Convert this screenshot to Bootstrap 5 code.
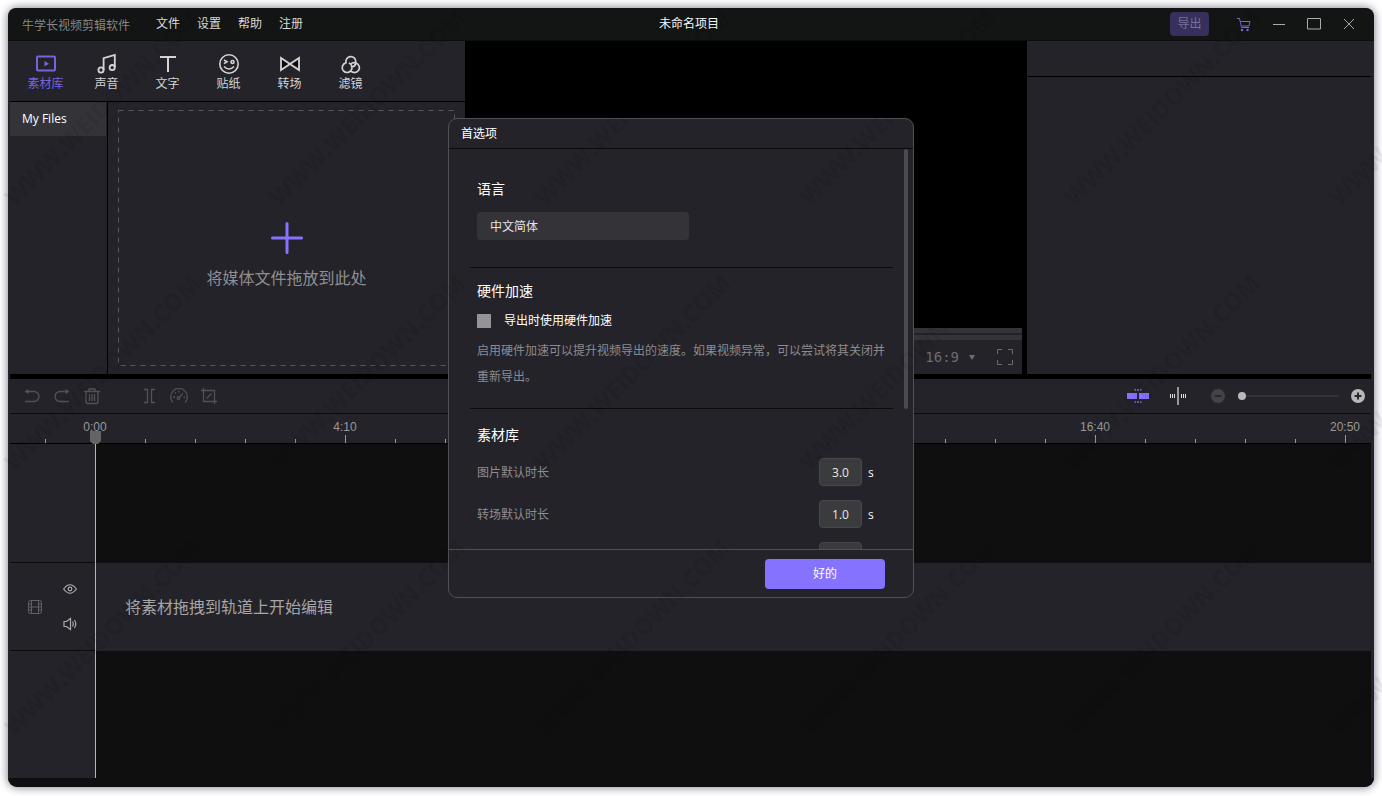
<!DOCTYPE html>
<html lang="zh-CN">
<head>
<meta charset="utf-8">
<meta name="viewport" content="width=device-width, initial-scale=1">
<title>牛学长视频剪辑软件</title>
<link href="https://cdn.jsdelivr.net/npm/bootstrap@5.3.0/dist/css/bootstrap.min.css" rel="stylesheet">
<script src="https://cdn.jsdelivr.net/npm/bootstrap@5.3.0/dist/js/bootstrap.bundle.min.js" defer></script>
<style>
  :root { --panel: #242329; --line: #0c0c0e; --accent: #8572ff; --stage: #0f0f0f; }
  body { height: 100vh; padding: 8px 8px 9px; background: #fff; overflow: hidden;
    font: 12px/16px "Open Sans", "Noto Sans CJK SC", sans-serif; color: #ccc; }
  button { background: none; border: 0; padding: 0; color: inherit; }
  svg { display: block; }
  svg:not([fill]) { fill: none; }
  svg:not([stroke]) { stroke: currentColor; }
  .app-window { background: var(--panel); border-radius: 10px; box-shadow: 0 0 8px 1px #8a8a9a; }

  .title-bar { height: 33px; background: #131514; border-bottom: 1px solid #0c0d0d; }
  .title-side { flex: 1 1 0; }
  .title-left { padding-left: 4px; }
  .app-name { color: #858585; padding: 4px 26px 0 10px; }
  .menu-links { padding-top: 2px; }
  .menu-link { color: #d8d8d8; text-decoration: none; margin-right: 17px; }
  .export-btn { width: 39px; height: 24px; border-radius: 4px; background: #372f5c; color: #77719a; margin-right: 17px; }
  .win-btn { width: 35px; height: 32px; display: grid; place-items: center; color: #aaa; }
  .win-btn.cart { color: #7a68e6; }

  .upper { flex: 333 1 0; min-height: 0; background: #000; margin: 0 3px 0 2px; }
  .splitter { height: 5px; margin: 0 3px 0 2px; }
  .lower { flex: 399 1 0; min-height: 0; margin-right: 3px; }
  .library { width: 455px; background: var(--panel); }
  .tool-tabs { height: 61px; padding: 11px 0 0 5px; border-bottom: 1px solid #000; }
  .tool-tab { width: 61px; color: #d4d4d4; }
  .tool-tab svg { margin: 0 auto; }
  .tool-tab.active { color: #7663e0; }
  .file-side { width: 98px; border-right: 1px solid #000; }
  .file-item { display: block; height: 34px; line-height: 34px; padding-left: 12px; margin-right: 1px;
    background: #343338; color: #fff; text-decoration: none; }
  .drop-zone { margin: 8px 10px; padding-top: 36px; gap: 12px; color: #8f8f92; font-size: 16px; line-height: 24px; }
  .drop-zone .frame { position: absolute; inset: 0; width: 100%; height: 100%; color: #58585c; }
  .inspector { width: 344px; background: var(--panel); }
  .inspector-head { height: 36px; border-bottom: 1px solid #000; }
  .player-bar { margin: 0 5px; background: var(--panel); }
  .seek { height: 12px; background: #343338; padding-top: 5px; }
  .seek div { height: 2px; background: #232228; }
  .player-tools { height: 34px; padding-right: 9px; color: #6c6c70; gap: 22px; }
  .aspect-btn { font: 14px/20px "DejaVu Sans Mono", monospace; gap: 10px; }

  .edit-tools { height: 35px; margin-left: 2px; padding-left: 7px; border-bottom: 1px solid var(--line); }
  .edit-btn { width: 30px; height: 34px; display: grid; place-items: center; color: #525156; }
  .edit-btn.wide { width: 40px; }
  .edit-btn.split { margin-left: 27px; }
  .zoom-in { margin: 0 6px 0 13px; }
  .zoom-range { -webkit-appearance: none; appearance: none; width: 100px; height: 12px; margin: 0; background: none; }
  .zoom-range::-webkit-slider-runnable-track { height: 2px; background: #343438; }
  .zoom-range::-webkit-slider-thumb { -webkit-appearance: none; width: 8px; height: 8px; margin-top: -3px;
    border-radius: 50%; background: #b8b8b8; border: 0; }
  .ruler { height: 30px; margin-left: 2px; padding-left: 60px; gap: 200px; border-bottom: 1px solid #000;
    font: 12px/14px "Liberation Sans", sans-serif; color: #999;
    background: repeating-linear-gradient(90deg, #999 0 1px, transparent 1px 50px) 35px 100% / 100% 4px no-repeat; }
  .mark-label { flex: 0 0 50px; text-align: center; padding-top: 6px;
    background: linear-gradient(#999, #999) 25px 100% / 1px 8px no-repeat; }
  .tracks { background: var(--stage); margin-left: 2px; }
  .track-row { height: 119px; }
  .track-row.media { height: 88px; background: var(--panel); }
  .track-head { width: 85px; background: var(--panel); border-bottom: 1px solid var(--line); }
  .media .track-head { padding-left: 17px; gap: 20px; }
  .track-switches { gap: 21px; }
  .track-row.spare .track-head { border: 0; }
  .track-hint { font-size: 16px; line-height: 24px; color: #a6a6a8; padding-left: 30px; }
  .playhead { position: absolute; left: 85px; top: 0; bottom: 0; width: 1px; background: #b5b5b5; }
  .playhead svg { position: absolute; left: -5px; top: -13px; }
  .bottom-edge { height: 9px; background: var(--stage); border-radius: 0 0 10px 10px; }

  .prefs { position: absolute; left: 440px; top: 110px; width: 466px; height: 480px; background: var(--panel);
    border: 1px solid #505055; border-radius: 9px; color: #fff; }
  .prefs-head { height: 30px; line-height: 29px; padding-left: 12px; border-bottom: 1px solid var(--line); flex-shrink: 0; }
  .prefs-body { padding: 30px 20px 0 21px; min-height: 0; }
  .prefs-body h2 { font-size: 14px; line-height: 20px; margin: 0 0 0 7px; font-weight: 400; }
  .prefs-body section { border-bottom: 1px solid var(--line); }
  .lang-select { width: 212px; height: 28px; border: 0; border-radius: 4px; background: #343338; color: #e4e4e4;
    margin: 13px 0 27px 7px; padding: 2px 13px 0; appearance: none; display: block; }
  .hw-section { padding: 13px 0 18px; }
  .hw-row { margin: 12px 0 9px 7px; }
  .hw-check { appearance: none; width: 14px; height: 14px; background: #949494; margin: 0 13px 0 0; }
  .hw-note { line-height: 26px; color: #8c8c90; margin: 0 1px 0 7px; }
  .prefs-body .media-title { padding: 16px 0 13px; }
  .time-row { height: 28px; margin: 0 19px 14px 7px; color: #8c8c90; }
  .time-row label, .time-row span { padding-top: 2px; }
  .time-row input { width: 43px; height: 28px; margin-right: 6px; border: 1px solid #48484b; border-radius: 4px;
    background: #3a3b3c; color: #e8e8e8; text-align: center; padding: 0; }
  .time-unit { width: 6px; }
  .scroll-thumb { position: absolute; right: 5px; top: 0; width: 4px; height: 260px; border-radius: 2px; background: #4b4955; }
  .prefs-foot { height: 48px; border-top: 1px solid #505055; padding-right: 28px; flex-shrink: 0; }
  .ok-btn { width: 120px; height: 30px; border-radius: 4px; background: var(--accent); color: #fff; }
  .watermark { position: fixed; inset: 0; width: 100%; height: 100%; pointer-events: none; }
  .watermark text { font: 700 24px "Open Sans", sans-serif; fill: #000; fill-opacity: .06; }
</style>
</head>
<body>
<div class="app-window h-100 d-flex flex-column position-relative">
  <header class="title-bar d-flex align-items-center rounded-top-3">
    <div class="title-side title-left d-flex">
      <span class="app-name">牛学长视频剪辑软件</span>
      <nav class="menu-links d-flex">
        <a class="menu-link" href="#">文件</a><a class="menu-link" href="#">设置</a><a class="menu-link" href="#">帮助</a><a class="menu-link" href="#">注册</a>
      </nav>
    </div>
    <div class="text-light">未命名项目</div>
    <div class="title-side d-flex justify-content-end align-items-center pe-2">
      <button class="export-btn">导出</button>
      <button class="win-btn cart" aria-label="购物车"><svg width="14" height="15"><path d="M0 1.500h2.500l2 9h7.500M3.500 4.500h9.500l-1 4.500h-7"/><circle cx="5" cy="13" r="1.200" fill="currentColor" stroke="none"/><circle cx="10.500" cy="13" r="1.200" fill="currentColor" stroke="none"/></svg></button>
      <button class="win-btn" aria-label="最小化"><svg width="12" height="12"><path d="M0 6.500h12"/></svg></button>
      <button class="win-btn" aria-label="最大化"><svg width="14" height="12"><path d="M.5 .5h13v10.500h-13z"/></svg></button>
      <button class="win-btn" aria-label="关闭"><svg width="10" height="10"><path d="M0 0l10 10M10 0L0 10"/></svg></button>
    </div>
  </header>

  <main class="upper d-flex">
    <section class="library d-flex flex-column">
      <div class="tool-tabs d-flex align-items-start">
        <button class="tool-tab active"><svg width="24" height="24" stroke-width="2"><rect x="3" y="4.500" width="18" height="14" rx="1"/><path d="M10.500 9l4.500 2.800l-4.500 2.800z" fill="currentColor" stroke="none"/></svg>素材库</button>
        <button class="tool-tab"><svg width="24" height="24" stroke-width="1.800"><circle cx="6" cy="18" r="2.600"/><circle cx="17.200" cy="15.600" r="2.600"/><path d="M8.600 18V6.200L19.800 3v12.600"/></svg>声音</button>
        <button class="tool-tab"><svg width="24" height="24" stroke-width="2"><path d="M4 5h16M12 5v15"/></svg>文字</button>
        <button class="tool-tab"><svg width="24" height="24" stroke-width="1.600"><circle cx="12" cy="12" r="9.200"/><path d="M7 8l3 1.800l-3 1.800M7 14.500q5 5 10 0"/><circle cx="15.500" cy="10" r="1.500"/></svg>贴纸</button>
        <button class="tool-tab"><svg width="24" height="24" stroke-width="1.800"><path d="M3 6v12l18-12v12z" fill="#0b0b0b"/></svg>转场</button>
        <button class="tool-tab"><svg width="24" height="24" stroke-width="1.700"><path d="M7.200 11.500a5 5 0 1 1 9.600-1.500c0 3-2 5-5 5M7 10.800a4.900 4.900 0 1 0 5.800 6.200c.6-2.500-.5-5-3-6M11.500 18.500a4.900 4.900 0 1 0 5.500-7.500c-2-.6-4-.2-5.300 1"/></svg>滤镜</button>
      </div>
      <div class="d-flex flex-fill">
        <div class="file-side"><a class="file-item" href="#">My Files</a></div>
        <div class="drop-zone flex-fill position-relative d-flex flex-column align-items-center justify-content-center">
          <svg class="frame"><rect x=".5" y=".5" style="width:calc(100% - 1px);height:calc(100% - 1px)" stroke-dasharray="5 5"/></svg>
          <svg width="32" height="32" stroke="#8572ff" stroke-width="3" stroke-linecap="round"><path d="M1.500 16h29M16 1.500v29"/></svg>
          <div>将媒体文件拖放到此处</div>
        </div>
      </div>
    </section>
    <section class="flex-fill d-flex flex-column justify-content-end">
      <div class="player-bar">
        <div class="seek"><div></div></div>
        <div class="player-tools d-flex justify-content-end align-items-center">
          <button class="aspect-btn d-flex align-items-center">16:9 <svg width="6" height="5" stroke="none" fill="currentColor"><path d="M0 0h6l-3 5z"/></svg></button>
          <button aria-label="全屏"><svg width="16" height="16"><path d="M.5 5V.5H5M11 .5h4.500V5M.5 11v4.500H5M11 15.500h4.500V11"/></svg></button>
        </div>
      </div>
    </section>
    <aside class="inspector"><div class="inspector-head"></div></aside>
  </main>
  <div class="splitter bg-black"></div>

  <section class="lower d-flex flex-column">
    <div class="edit-tools d-flex align-items-center">
      <button class="edit-btn" aria-label="撤销"><svg width="16" height="16" stroke-width="1.300"><path d="M2 3.500h8a5 5 0 0 1 0 10H1"/><path d="M4.500 1v5L.5 3.500z" fill="currentColor" stroke="none"/></svg></button>
      <button class="edit-btn" aria-label="重做"><svg width="16" height="16" stroke-width="1.300"><path d="M14 3.500H6a5 5 0 0 0 0 10h9"/><path d="M11.500 1v5l4-2.500z" fill="currentColor" stroke="none"/></svg></button>
      <button class="edit-btn" aria-label="删除"><svg width="16" height="17" stroke-width="1.300"><path d="M0 3.500h16M5 3.500V1h6v2.500M2 3.500v10q0 2 2 2h8q2 0 2-2v-10M5.500 6v7M8 6v7M10.500 6v7"/></svg></button>
      <button class="edit-btn split" aria-label="分割"><svg width="13" height="16" stroke-width="1.300"><path d="M1 1.500h3.500v13H1M12 1.500H8.500v13H12"/></svg></button>
      <button class="edit-btn" aria-label="速度"><svg width="18" height="16" stroke-width="1.300"><path d="M3 14.500A8.300 8.300 0 1 1 15 14.500M9.500 9l3.500-3.500M3 9h2M13.500 9H15M9 2.500v2M5 4.500l1 1"/><circle cx="8.500" cy="10" r="1.300"/></svg></button>
      <button class="edit-btn" aria-label="裁剪"><svg width="16" height="16" stroke-width="1.300"><path d="M0 2.500h13.500V16M2.500 0v13.500H16M5.500 10.500l5-5"/></svg></button>
      <div class="ms-auto d-flex align-items-center">
        <button class="edit-btn wide" aria-label="吸附"><svg width="22" height="14" stroke="none" fill="#8572ff"><path d="M0 4h10v6H0zM12 4h10v6H12z"/><path d="M7 0h2v1H7zM10 0h2v2h-2zM13 0h2v1h-2zM8 1h1v1H8zM13 1h1v1h-1zM7 13h2v1H7zM10 12h2v2h-2zM13 13h2v1h-2zM8 12h1v1H8zM13 12h1v1h-1z" opacity=".7"/></svg></button>
        <button class="edit-btn wide" aria-label="波形"><svg width="16" height="18"><path d="M.5 7v4M2.500 7v4M4.500 7v4M11.500 7v4M13.500 7v4M15.500 7v4" stroke="#ddd"/><path d="M8 0v18" stroke="#999" stroke-width="2"/></svg></button>
        <button class="edit-btn wide" aria-label="缩小"><svg width="14" height="14" stroke="#29282d" stroke-width="2"><circle cx="7" cy="7" r="7" fill="#444348" stroke="none"/><path d="M3.500 7h7"/></svg></button>
        <input class="zoom-range" type="range" min="0" max="100" value="0" aria-label="时间轴缩放">
        <button class="zoom-in" aria-label="放大"><svg width="14" height="14" stroke="#29282d" stroke-width="2"><circle cx="7" cy="7" r="7" fill="#b8b8b8" stroke="none"/><path d="M3.500 7h7M7 3.500v7"/></svg></button>
      </div>
    </div>
    <div class="ruler d-flex overflow-hidden flex-shrink-0">
      <span class="mark-label">0:00</span><span class="mark-label">4:10</span><span class="mark-label"></span><span class="mark-label"></span><span class="mark-label">16:40</span><span class="mark-label">20:50</span>
    </div>
    <div class="tracks flex-fill d-flex flex-column position-relative">
      <div class="track-row d-flex"><div class="track-head"></div></div>
      <div class="track-row media d-flex align-items-stretch">
        <div class="track-head d-flex align-items-center">
          <svg width="16" height="16" stroke="#626166"><rect x="1.500" y="1.500" width="13" height="13" rx="2"/><path d="M4.500 1.500v13M11.500 1.500v13M4.500 8h7M1.500 5h3M1.500 8h3M1.500 11h3M11.500 5h3M11.500 8h3M11.500 11h3"/></svg>
          <div class="track-switches d-flex flex-column">
            <button aria-label="显示"><svg width="14" height="14" stroke="#aaa" stroke-width="1.200"><path d="M.6 7Q7-1.500 13.400 7Q7 15.500 .6 7z"/><circle cx="7" cy="7" r="1.800"/></svg></button>
            <button aria-label="静音"><svg width="14" height="14" stroke="#aaa" stroke-width="1.200"><path d="M1 4.500h2.500L7.500 1.500v11L3.500 9.500H1zM9.500 4.500q1.500 2.500 0 5M11.500 3q2.500 4 0 8"/></svg></button>
          </div>
        </div>
        <div class="track-hint align-self-center">将素材拖拽到轨道上开始编辑</div>
      </div>
      <div class="track-row spare d-flex flex-fill"><div class="track-head"></div></div>
      <div class="playhead"><svg width="11" height="13" stroke="none" fill="#646464"><path d="M0 0h11v10l-3 3H3l-3-3z"/></svg></div>
    </div>
  </section>
  <div class="bottom-edge"></div>

  <div class="prefs d-flex flex-column" role="dialog" aria-labelledby="prefs-title">
    <div class="prefs-head" id="prefs-title">首选项</div>
    <div class="prefs-body flex-fill overflow-hidden position-relative">
      <section>
        <h2><label for="lang">语言</label></h2>
        <select class="lang-select" id="lang"><option>中文简体</option></select>
      </section>
      <section class="hw-section">
        <h2>硬件加速</h2>
        <div class="hw-row d-flex align-items-center"><input class="hw-check" type="checkbox" id="hw"><label for="hw">导出时使用硬件加速</label></div>
        <p class="hw-note">启用硬件加速可以提升视频导出的速度。如果视频异常，可以尝试将其关闭并重新导出。</p>
      </section>
      <h2 class="media-title">素材库</h2>
      <div class="time-row d-flex align-items-center"><label class="me-auto" for="t1">图片默认时长</label><input id="t1" value="3.0"><span class="time-unit text-light">s</span></div>
      <div class="time-row d-flex align-items-center"><label class="me-auto" for="t2">转场默认时长</label><input id="t2" value="1.0"><span class="time-unit text-light">s</span></div>
      <div class="time-row d-flex align-items-center justify-content-end"><input aria-label="默认时长"><span class="time-unit"></span></div>
      <div class="scroll-thumb"></div>
    </div>
    <div class="prefs-foot d-flex align-items-center justify-content-end"><button class="ok-btn">好的</button></div>
  </div>
</div>

<svg class="watermark" stroke="none" aria-hidden="true">
  <defs><pattern id="wm" width="265" height="265" patternUnits="userSpaceOnUse"><text transform="translate(15 207) rotate(-45)">WWW.WEIDOWN.COM</text></pattern></defs>
  <rect width="100%" height="100%" fill="url(#wm)"/>
</svg>
</body>
</html>
